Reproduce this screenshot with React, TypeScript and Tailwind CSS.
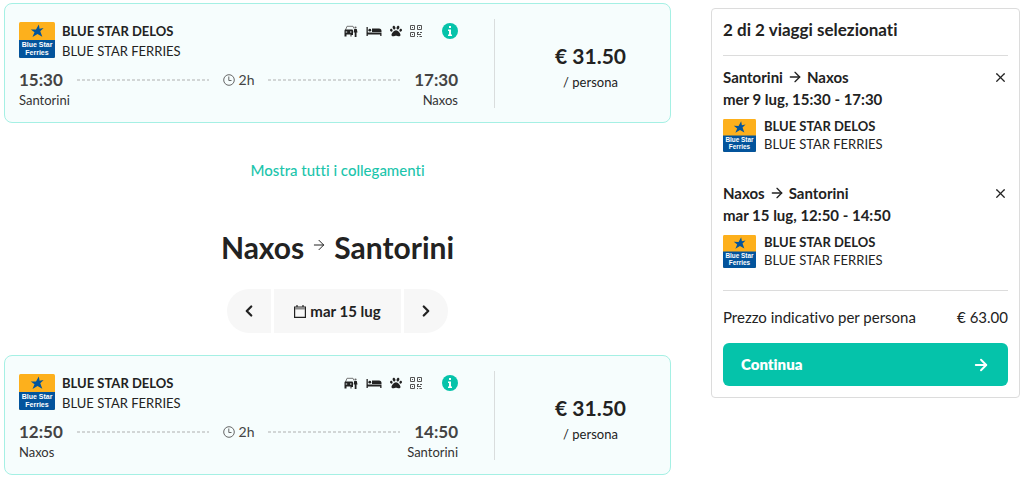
import { useState } from 'react'
import type { ReactNode } from 'react'
import { ArrowRight, ChevronLeft, ChevronRight, X } from 'lucide-react'
import { FaPaw } from 'react-icons/fa'

type Trip = {
  id: number
  from: string
  to: string
  date: string
  departure: string
  arrival: string
  duration: string
  price: number
}

const VESSEL = 'BLUE STAR DELOS'
const COMPANY = 'BLUE STAR FERRIES'

const trips: Trip[] = [
  { id: 1, from: 'Santorini', to: 'Naxos', date: 'mer 9 lug', departure: '15:30', arrival: '17:30', duration: '2h', price: 31.5 },
  { id: 2, from: 'Naxos', to: 'Santorini', date: 'mar 15 lug', departure: '12:50', arrival: '14:50', duration: '2h', price: 31.5 },
]

const formatPrice = (value: number) => `€ ${value.toFixed(2)}`

function CompanyLogo({ className }: { className: string }) {
  return (
    <svg viewBox="0 0 36 36" className={className} role="img" aria-label="Blue Star Ferries">
      <rect width="36" height="36" rx="1.5" fill="#fdb01c" />
      <path d="M0 18h36v16.5a1.5 1.5 0 0 1-1.5 1.5h-33A1.5 1.5 0 0 1 0 34.5z" fill="#03549c" />
      <path d="M19.800 2.500l.8 4.200 4-.7-3.300 3.300 2 5.500-4.800-2.900-5 3.200 2-4.800-3.700-2.900 5.200.1z" fill="#03549c" />
      <text x="18" y="25" textAnchor="middle" fill="#fff" fontSize="7" fontWeight="700" fontFamily="Liberation Sans, sans-serif">Blue Star</text>
      <text x="18" y="33" textAnchor="middle" fill="#fff" fontSize="7" fontWeight="700" fontFamily="Liberation Sans, sans-serif">Ferries</text>
    </svg>
  )
}

function CarIcon() {
  return (
    <svg viewBox="0 0 14 12" className="h-3 w-3.5" fill="none" aria-hidden="true">
      <path d="M1.5 5L3 1.300h6l1 2.200" stroke="#777" />
      <path d="M1 4.600h7.500l.5.900V10H7.500v1.500H6.500V9.500h-4v2H.5V5.600z" fill="currentColor" />
      <path d="M1.700 7h1.500M6 7h1.500" stroke="#f6fdfd" />
      <circle cx="11.5" cy="2.500" r="1.100" fill="#666" />
      <path d="M10.200 4h2.600l.7 3.500h-1V12h-1.800V7.500H9.600z" fill="currentColor" />
    </svg>
  )
}

function BedIcon() {
  return (
    <svg viewBox="0 0 16 12" className="h-3 w-4" fill="currentColor" aria-hidden="true">
      <path d="M.5 2h1.300v5.500h13.700V11h-1.300V9.500H1.800V11H.5z" />
      <circle cx="3.800" cy="5.200" r="1.400" />
      <path d="M6 3.500h7a2.500 2.500 0 0 1 2.500 2.500v1H6z" />
    </svg>
  )
}

function QrIcon() {
  return (
    <svg viewBox="0 0 12 12" className="size-3" fill="none" stroke="#555" aria-hidden="true">
      <path d="M.5.5h4v4h-4zM7.5.5h4v4h-4zM.5 7.5h4v4h-4z" />
      <path d="M2 2.500h1M9 2.500h1M2 9.500h1M7 7.500h2M10 7.500h2M8 9.500h3M7 11.500h1M9.500 11.500h2.500M7.500 7v3" />
    </svg>
  )
}

function InfoIcon() {
  return (
    <svg viewBox="0 0 16 16" className="size-4" aria-hidden="true">
      <circle cx="8" cy="8" r="8" fill="#06c3aa" />
      <path d="M7 3h2v2H7zM6 6.500h3v5h1V13H6v-1.500h1V8H6z" fill="#fff" />
    </svg>
  )
}

function ClockIcon() {
  return (
    <svg viewBox="0 0 12 12" className="size-3" fill="none" stroke="#666" aria-hidden="true">
      <circle cx="6" cy="6" r="5.300" />
      <path d="M5.800 2.500v4H8.500" />
    </svg>
  )
}

function CalendarIcon() {
  return (
    <svg viewBox="0 0 12 13" className="h-[13px] w-3" fill="none" stroke="currentColor" aria-hidden="true">
      <path d="M.6 2h10.800v10.300H.6z" strokeWidth="1.2" />
      <path d="M1 3.500h10" stroke="#888" strokeWidth="2" />
      <path d="M3 0v2M9 0v2" strokeWidth="1.2" />
    </svg>
  )
}

function Dashes() {
  return <span className="h-0.5 flex-1 bg-[repeating-linear-gradient(90deg,#d2d6d6_0_3px,transparent_3px_5px)]" />
}

function TripCard({ trip }: { trip: Trip }) {
  return (
    <article className="flex rounded-lg border border-[#a5f0e4] bg-[#f6fdfd] pt-[15px] pb-3.5 pl-3.5">
      <div className="min-w-0 flex-1">
        <div className="flex items-start pt-0.5">
          <CompanyLogo className="mt-px size-9 shrink-0" />
          <div className="ml-[7px] flex-1 text-[13px] leading-5">
            <h3 className="font-bold">{VESSEL}</h3>
            <p>{COMPANY}</p>
          </div>
          <div className="flex h-5 items-center gap-2">
            <CarIcon />
            <BedIcon />
            <FaPaw size={12} />
            <QrIcon />
            <button type="button" aria-label="Informazioni" className="ml-3">
              <InfoIcon />
            </button>
          </div>
        </div>
        <div className="mt-[7px] flex items-center gap-3.5 text-[#444]">
          <time className="text-[17px] leading-6 font-bold">{trip.departure}</time>
          <Dashes />
          <span className="flex items-center gap-1 text-sm leading-5">
            <ClockIcon />
            {trip.duration}
          </span>
          <Dashes />
          <time className="text-[17px] leading-6 font-bold">{trip.arrival}</time>
        </div>
        <div className="flex justify-between text-[13px] leading-4 text-[#333]">
          <span>{trip.from}</span>
          <span>{trip.to}</span>
        </div>
      </div>
      <div className="ml-9 flex w-44 flex-col items-center justify-center border-l border-[#d9dddd] pt-2 pl-4">
        <p className="text-[21px] leading-6 font-bold">{formatPrice(trip.price)}</p>
        <p className="mt-1 text-[13px] leading-5">/ persona</p>
      </div>
    </article>
  )
}

function SelectedTrip({ trip, onRemove }: { trip: Trip; onRemove: () => void }) {
  return (
    <li>
      <div className="flex items-start justify-between">
        <div className="text-[15px] leading-[22px] font-bold">
          <p className="flex items-center gap-1">
            {trip.from} <ArrowRight size={16} strokeWidth={2} /> {trip.to}
          </p>
          <p>{`${trip.date}, ${trip.departure} - ${trip.arrival}`}</p>
        </div>
        <button type="button" aria-label="Rimuovi" onClick={onRemove} className="flex h-[22px] items-center">
          <X size={15} strokeWidth={2} />
        </button>
      </div>
      <div className="mt-[7px] flex items-center gap-2">
        <CompanyLogo className="size-[33px] shrink-0" />
        <div className="text-[13px] leading-[18px]">
          <p className="font-bold">{VESSEL}</p>
          <p>{COMPANY}</p>
        </div>
      </div>
    </li>
  )
}

function DateButton({ className, label, children }: { className: string; label: string; children: ReactNode }) {
  return (
    <button type="button" aria-label={label} className={`flex h-11 items-center justify-center bg-[#f7f7f7] hover:bg-gray-200 ${className}`}>
      {children}
    </button>
  )
}

export default function App() {
  const [selected, setSelected] = useState(trips)
  const total = selected.reduce((sum, trip) => sum + trip.price, 0)
  const [outbound, inbound] = trips

  return (
    <div className="flex items-start gap-10 bg-white px-1 pt-[3px] pb-1 font-['Lato','Open_Sans',sans-serif] text-[#222] [font-variant-ligatures:none]">
      <main className="min-w-0 flex-1">
        <TripCard trip={outbound} />
        <div className="mt-[35px] flex justify-center">
          <a href="#collegamenti" className="text-[15px] leading-6 font-medium text-[#1cc5ac]">
            Mostra tutti i collegamenti
          </a>
        </div>
        <h2 className="mt-[45px] flex items-center justify-center gap-[7px] text-[30px] leading-10 font-bold">
          {inbound.from} <ArrowRight size={16} strokeWidth={1.5} className="mb-1" /> {inbound.to}
        </h2>
        <div className="mt-[22px] flex justify-center gap-[3px]">
          <DateButton label="Giorno precedente" className="w-11 rounded-l-full">
            <ChevronLeft size={18} strokeWidth={3} />
          </DateButton>
          <DateButton label="Scegli la data" className="w-[127px] gap-1 text-[15px] font-bold">
            <CalendarIcon /> {inbound.date}
          </DateButton>
          <DateButton label="Giorno successivo" className="w-11 rounded-r-full">
            <ChevronRight size={18} strokeWidth={3} />
          </DateButton>
        </div>
        <div className="mt-[22px]">
          <TripCard trip={inbound} />
        </div>
      </main>

      <aside className="mt-[5px] w-[309px] shrink-0 rounded border border-[#dcdcdc] px-[11px] pt-2 pb-[11px]">
        <h2 className="border-b border-[#dcdcdc] pb-3 text-[17px] leading-[26px] font-bold">
          {`${selected.length} di ${trips.length} viaggi selezionati`}
        </h2>
        <ul className="flex flex-col gap-[29px] border-b border-[#dcdcdc] pt-2.5 pb-[21px]">
          {selected.map((trip) => (
            <SelectedTrip key={trip.id} trip={trip} onRemove={() => setSelected(selected.filter((t) => t.id !== trip.id))} />
          ))}
        </ul>
        <p className="flex justify-between pt-3.5 pb-3.5 text-[15px] leading-6">
          <span>Prezzo indicativo per persona</span>
          <span>{formatPrice(total)}</span>
        </p>
        <button type="button" className="flex h-[43px] w-full items-center justify-between rounded-md bg-[#05c3aa] px-[18px] text-[15px] font-extrabold text-white hover:bg-[#04b29b]">
          Continua
          <ArrowRight size={18} strokeWidth={2.5} />
        </button>
      </aside>
    </div>
  )
}
